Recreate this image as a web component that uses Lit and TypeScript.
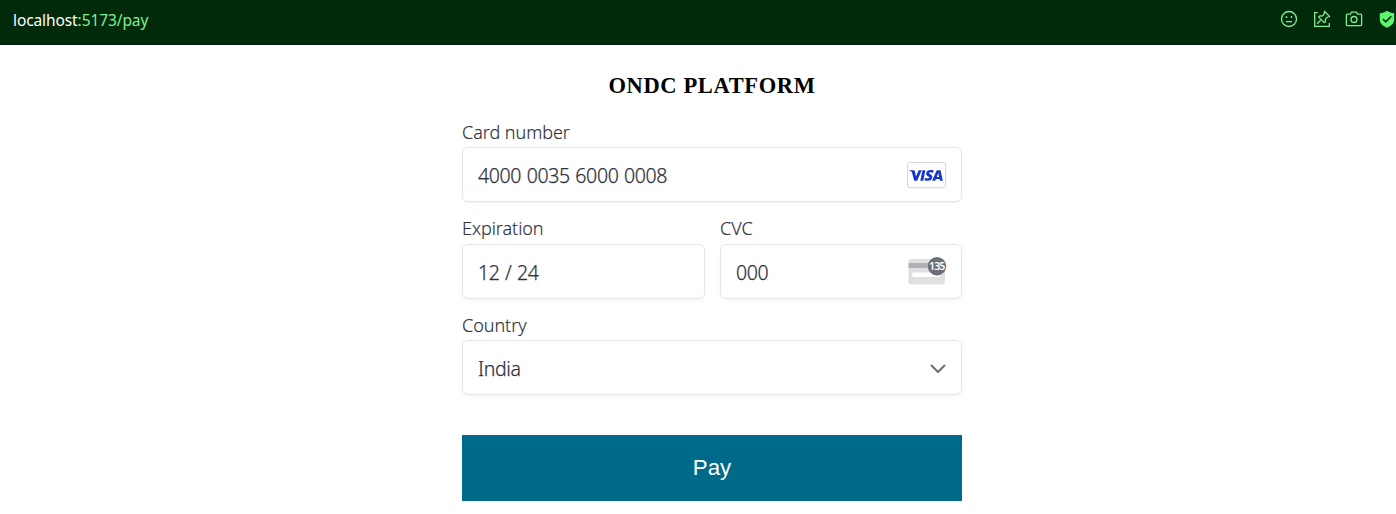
import { LitElement, html, css, svg } from "lit";
import { customElement } from "lit/decorators.js";

@customElement("browser-bar")
class BrowserBar extends LitElement {
  static styles = css`
    :host {
      display: flex;
      box-sizing: border-box;
      height: 45px;
      justify-content: space-between;
      background: #002a0a;
      border-bottom: 1px solid #001a05;
      padding: 0 0 0 13px;
      overflow: hidden;
      font: 15.5px/22px "Noto Sans", "Open Sans", sans-serif;
    }
    .url { color: #80ee92; padding-top: 9px; white-space: nowrap; letter-spacing: -0.1px; }
    .host { color: #fff; }
    .icons { display: flex; gap: 14px; padding-top: 10px; }
    svg { display: block; width: 18px; height: 18px; fill: none; stroke: #80ee92; stroke-width: 1.3; }
    .face { margin-right: 1px; }
    .shield { margin-left: 1px; }
  `;
  render() {
    return html`
      <div class="url"><span class="host">localhost</span>:5173/pay</div>
      <div class="icons">
        <svg class="face" viewBox="0 0 18 18"><circle cx="9" cy="9" r="7.500" /><path d="M6.500 6v2M11.500 6v2M6 11.700h6" /></svg>
        <svg viewBox="0 0 18 18">
          <path d="M4.800 2.700H1.700v13.600h14.600v-3.300M4 13.700l3.600-3.500M11.600 1.500l4.900 4.900-2.200.8-1.800 1.800-.1 2.700-1.100 1L5.700 7.100l1.100-1.100 2.700-.1 1.500-1.800z" />
        </svg>
        <svg viewBox="0 0 18 18">
          <path d="M2.400 4.200h2.900l1.400-2h4.600l1.400 2h2.900q1 0 1 1v9.400q0 1-1 1H2.400q-1 0-1-1V5.200q0-1 1-1z" /><circle cx="9" cy="9.500" r="3" />
        </svg>
        <svg class="shield" viewBox="0 0 18 18">
          <path fill="#5df56f" stroke="none" d="M9 .7c2 1.600 4.500 2.300 7.200 2.500v6.300c0 4-3 6.300-7.200 8.200-4.200-1.900-7.200-4.200-7.200-8.200V3.200C4.500 3 7 2.300 9 .7z" />
          <path stroke="#002a0a" stroke-width="1.600" d="M4.800 9l3 2.900L13.300 6.300" />
        </svg>
      </div>
    `;
  }
}

const visa = svg`<svg class="visa" viewBox="0 0 40 27">
  <rect x="1.500" y=".5" width="38" height="25.200" rx="2.500" fill="#fff" stroke="#d6d6d8" />
  <g fill="#1434cb" transform="translate(.3 0)">
    <path d="M2.500 8.200h4.700c.7 0 1.200.3 1.400 1l1.100 5.400 2.700-6.400h3L10.800 18.700H7.900L5.600 10.300C5.300 9.500 4 8.900 2.500 8.600z" />
    <path d="M16.200 8.200h2.900l-2.200 10.500H14z" />
    <path d="M27.300 8.500l-.5 2.300c-1.900-.8-3.900-.7-4 .2-.1 1.100 3.400 1.300 3.200 4.200-.2 3.400-4.200 4.200-7.800 3l.5-2.400c1.900 1 4.400.9 4.500-.2.100-1.200-3.400-1.300-3.300-4.200.2-3.200 4.100-4 7.400-2.900z" />
    <path d="M31.300 8.200h2.900l2.300 10.500h-2.800l-.4-1.700h-3.700l-.8 1.700h-3l4.200-9.500c.2-.6.700-1 1.300-1zm.6 2.800l-1.500 3.900h2.400z" />
  </g>
</svg>`;

const cvc = svg`<svg class="cvc" viewBox="0 0 40 30">
  <rect x="1.500" y="3" width="36.500" height="25.500" rx="3" fill="#e0e0e3" />
  <rect x="1.500" y="7" width="36.500" height="5" fill="#b1b1b7" />
  <rect x="5" y="16.500" width="29" height="4.500" rx="2" fill="#fff" />
  <circle cx="30" cy="10.300" r="9.200" fill="#6d6e78" />
  <text x="29.700" y="14" text-anchor="middle">135</text>
</svg>`;

@customElement("app-root")
class AppRoot extends LitElement {
  static styles = css`
    :host {
      display: block;
      height: 514px;
      overflow: hidden;
      background: #fff;
    }
    .form {
      width: 500px;
      margin-left: 462px;
      color: #30313d;
      font-family: "Noto Sans", "Open Sans", sans-serif;
    }
    h1 {
      margin: 0;
      padding-top: 27px;
      font: bold 22.500px/28px "Liberation Serif", serif;
      letter-spacing: 0.620px;
      text-align: center;
      color: #000;
    }
    .fields {
      display: grid;
      grid-template-columns: 243px 242px;
      column-gap: 15px;
      row-gap: 14.500px;
      padding-top: 20px;
    }
    .wide { grid-column: 1 / -1; }
    .label {
      display: block;
      height: 27px;
      font-size: 18px;
      font-weight: 300;
      line-height: 24px;
      letter-spacing: -0.050px;
      -webkit-text-stroke: 0.150px currentColor;
    }
    .half .label { line-height: 22.600px; }
    .box {
      display: flex;
      box-sizing: border-box;
      height: 55px;
      align-items: center;
      justify-content: space-between;
      border: 1px solid #e6e6e6;
      border-radius: 6px;
      padding: 2px 15px 0;
      font-size: 19.500px;
      font-weight: 300;
      letter-spacing: -0.350px;
      word-spacing: 0.800px;
      -webkit-text-stroke: 0.250px currentColor;
      box-shadow: 0 1px 2px rgba(0, 0, 0, 0.03), 0 3px 6px rgba(0, 0, 0, 0.02);
    }
    .visa { width: 40px; height: 27px; }
    .cvc { width: 40px; height: 30px; margin: -3px -1px 0 0; }
    .cvc text { fill: #fff; font: 600 10.500px "Noto Sans", sans-serif; letter-spacing: -0.900px; -webkit-text-stroke: 0; }
    .chevron { width: 16px; height: 10px; fill: none; stroke: #6d6e78; stroke-width: 2; stroke-linecap: round; stroke-linejoin: round; }
    button {
      display: block;
      width: 500px;
      height: 66px;
      margin-top: 40px;
      border: 0;
      padding: 0;
      background: #006a8a;
      color: #fff;
      font: 22.300px/66px "Liberation Sans", sans-serif;
    }
  `;
  private field(label: string, value: string, icon: unknown = "", wide = false) {
    return html`<div class=${wide ? "wide" : "half"}>
      <span class="label">${label}</span>
      <div class="box"><span>${value}</span>${icon}</div>
    </div>`;
  }
  render() {
    return html`
      <browser-bar></browser-bar>
      <div class="form">
        <h1>ONDC PLATFORM</h1>
        <div class="fields">
          ${this.field("Card number", "4000 0035 6000 0008", visa, true)}
          ${this.field("Expiration", "12 / 24")}
          ${this.field("CVC", "000", cvc)}
          ${this.field("Country", "India", svg`<svg class="chevron" viewBox="0 0 16 10"><path d="M1.500 1.500L8 8l6.500-6.500" /></svg>`, true)}
        </div>
        <button>Pay</button>
      </div>
    `;
  }
}
